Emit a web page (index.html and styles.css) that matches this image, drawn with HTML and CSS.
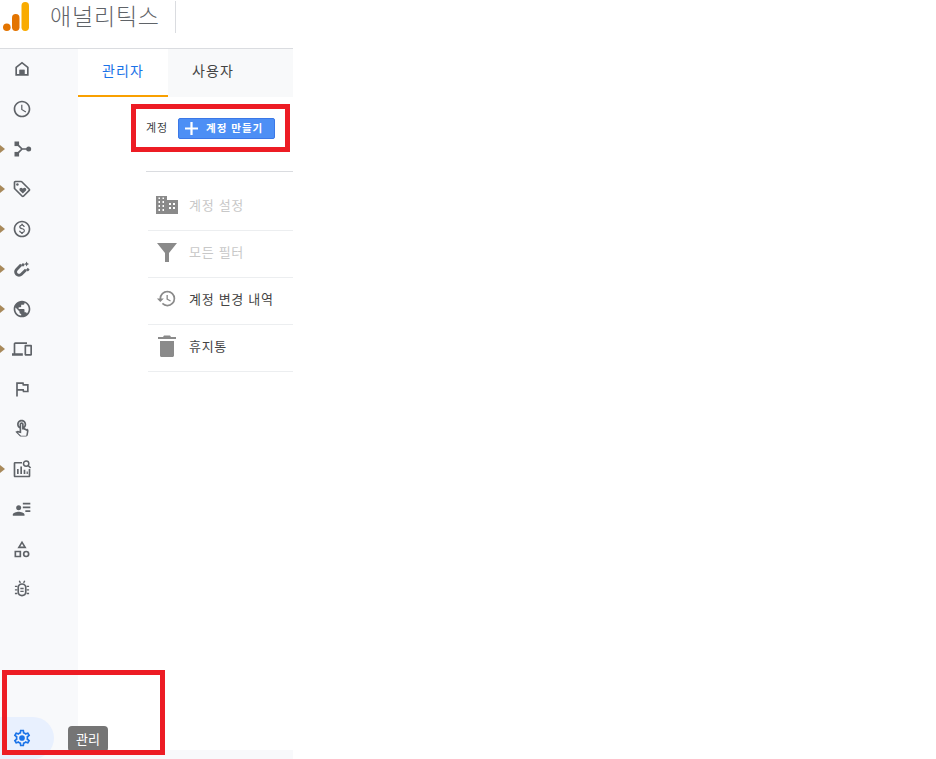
FILE: index.html
```html
<!DOCTYPE html>
<html lang="ko">
<head>
<meta charset="utf-8">
<title>애널리틱스</title>
<link rel="stylesheet" href="styles.css">
</head>
<body>
<div class="page">
  <header class="topbar">
    <svg class="logo" viewBox="0 0 26 29"><rect x="18.500" y="0" width="7.500" height="29" rx="3.700" fill="#f9ab00"/><rect x="9" y="12" width="7.500" height="17" rx="3.700" fill="#e37400"/><circle cx="3.800" cy="25.200" r="3.800" fill="#e37400"/></svg>
    <span class="brand">애널리틱스</span>
    <span class="brand-sep"></span>
  </header>
  <div class="body">
    <nav class="sidebar">
      <div class="nav-item"><svg class="ic" viewBox="0 0 24 24"><path d="M12 3.200L4 9.500V20h16V9.500zM12 5.700l6 4.700V18h-3v-5H9v5H6v-7.600z" fill-rule="evenodd"/><path d="M9 13h6v6H9z"/></svg></div>
      <div class="nav-item"><svg class="ic" viewBox="0 0 24 24"><path d="M11.990 2C6.470 2 2 6.480 2 12s4.470 10 9.990 10C17.520 22 22 17.520 22 12S17.520 2 11.990 2zM12 20c-4.420 0-8-3.580-8-8s3.580-8 8-8 8 3.580 8 8-3.580 8-8 8zm.5-13H11v6l5.250 3.150.75-1.230-4.500-2.670z"/></svg></div>
      <div class="nav-item has-arrow"><svg class="ic" viewBox="0 0 24 24"><rect x="3" y="3" width="5.500" height="5.500"/><rect x="3" y="15.500" width="5.500" height="5.500"/><circle cx="20" cy="12" r="3"/><path d="M5.500 5.500l6.500 6.500-6.500 6.500M11 12h8" fill="none" stroke="#5f6368" stroke-width="2"/></svg></div>
      <div class="nav-item has-arrow"><svg class="ic" viewBox="0 0 24 24"><path d="M21.410 11.580l-9-9C12.050 2.220 11.550 2 11 2H4c-1.100 0-2 .9-2 2v7c0 .55.22 1.050.59 1.420l9 9c.36.36.86.58 1.410.58s1.050-.22 1.410-.59l7-7c.37-.36.59-.86.59-1.410s-.23-1.060-.59-1.420zM13 20.010L4 11V4h7v-.01l9 9-7 7.020z"/><circle cx="6.500" cy="6.500" r="1.500"/><path d="M8.900 12.550c0 .57.23 1.070.6 1.450l3.500 3.500 3.500-3.500c.37-.37.6-.89.6-1.450 0-1.130-.92-2.050-2.050-2.050-.57 0-1.080.23-1.450.6l-.6.6-.6-.59c-.37-.38-.88-.61-1.450-.61-1.130 0-2.050.92-2.050 2.050z"/></svg></div>
      <div class="nav-item has-arrow"><svg class="ic" viewBox="0 0 24 24"><path d="M12 2C6.480 2 2 6.480 2 12s4.480 10 10 10 10-4.480 10-10S17.520 2 12 2zm0 18c-4.410 0-8-3.590-8-8s3.590-8 8-8 8 3.590 8 8-3.590 8-8 8z"/><path d="M12.400 11.100c-1.600-.5-2.200-.9-2.200-1.700 0-.8.7-1.300 1.800-1.300 1.200 0 1.700.6 1.700 1.400h1.600c0-1.200-.8-2.300-2.200-2.700V5.600h-2v1.200c-1.400.3-2.500 1.200-2.500 2.600 0 1.700 1.400 2.500 3.400 3 1.800.5 2.200 1 2.200 1.800 0 .5-.4 1.400-2 1.400-1.500 0-2.100-.7-2.200-1.500H8.400c.1 1.500 1.200 2.400 2.600 2.700v1.200h2v-1.200c1.400-.3 2.500-1.100 2.500-2.600 0-2-1.700-2.700-3.100-3.100z"/></svg></div>
      <div class="nav-item has-arrow"><svg class="ic" viewBox="0 0 24 24"><path d="M11 7L5.500 12.500a4.100 4.100 0 0 0 5.800 5.800L16.800 12.800" fill="none" stroke="#5f6368" stroke-width="3.400"/><path d="M11 7l2.200-2.200 2.200 2.200-2.200 2.200zM16.800 12.800L19 10.600l2.200 2.200-2.200 2.200z"/><path d="M17.500 3l1 2 2 1-2 1-1 2-1-2-2-1 2-1z"/></svg></div>
      <div class="nav-item has-arrow"><svg class="ic" viewBox="0 0 24 24"><path d="M12 2C6.480 2 2 6.480 2 12s4.480 10 10 10 10-4.480 10-10S17.520 2 12 2zm-1 17.930c-3.950-.49-7-3.850-7-7.930 0-.62.08-1.210.21-1.790L9 15v1c0 1.100.9 2 2 2v1.930zm6.900-2.540c-.26-.81-1-1.390-1.900-1.390h-1v-3c0-.55-.45-1-1-1H8v-2h2c.55 0 1-.45 1-1V7h2c1.100 0 2-.9 2-2v-.41c2.930 1.190 5 4.060 5 7.410 0 2.080-.8 3.970-2.100 5.390z"/></svg></div>
      <div class="nav-item has-arrow"><svg class="ic" viewBox="0 0 24 24"><path d="M4 6h14V4H4c-1.100 0-2 .9-2 2v11H0v3h13v-3H4V6zm19 1h-7c-.55 0-1 .45-1 1v11c0 .55.45 1 1 1h7c.55 0 1-.45 1-1V8c0-.55-.45-1-1-1zm-1 11h-5V9h5v9z"/></svg></div>
      <div class="nav-item"><svg class="ic" viewBox="0 0 24 24"><path d="M12.360 6l.4 2H18v6h-3.360l-.4-2H7V6h5.360M14 4H5v17h2v-7h5.600l.4 2h7V6h-5.600L14 4z"/></svg></div>
      <div class="nav-item"><svg class="ic" viewBox="0 0 24 24"><path d="M18.190 12.440l-3.240-1.620c1.290-1 2.120-2.560 2.120-4.320C17.070 3.470 14.600 1 11.570 1s-5.500 2.470-5.500 5.500c0 2.130 1.220 3.980 3 4.890v3.260c-2.150-.46-2.020-.44-2.260-.44-.53 0-1.030.21-1.410.59L4 15.220l5.090 5.090C9.520 20.750 10.120 21 10.740 21h6.300c.98 0 1.810-.7 1.970-1.670l.8-4.710c.22-1.300-.43-2.580-1.620-3.180zm-.35 2.850l-.8 4.710h-6.300c-.09 0-.17-.04-.24-.1l-3.680-3.680 4.250.89V6.500c0-.28.22-.5.5-.5s.5.22.5.5v6h1.760l3.460 1.730c.4.2.62.63.55 1.060zM8.070 6.500c0-1.930 1.570-3.500 3.500-3.500s3.500 1.570 3.500 3.500c0 .95-.38 1.810-1 2.440V6.500c0-1.380-1.120-2.500-2.500-2.500s-2.500 1.120-2.500 2.500v2.440c-.62-.63-1-1.490-1-2.440z"/></svg></div>
      <div class="nav-item has-arrow"><svg class="ic" viewBox="0 0 24 24"><path d="M12 3.500H3.500C2.700 3.500 2 4.200 2 5v15.500c0 .8.7 1.500 1.500 1.500h17c.8 0 1.500-.7 1.500-1.500V12h-2v8H4V5.500h8z"/><path d="M6 12h2v6H6zM10 9h2v9h-2zM14 13h2v5h-2zM17.500 15h1.500v3h-1.500z"/><circle cx="17" cy="5.500" r="3.200" fill="none" stroke="#5f6368" stroke-width="1.800"/><path d="M19.300 7.800l3 3" stroke="#5f6368" stroke-width="2"/></svg></div>
      <div class="nav-item"><svg class="ic" viewBox="0 0 24 24"><circle cx="8" cy="10.500" r="3"/><path d="M1 20v-1.500c0-2 4.500-3.300 7-3.300s7 1.300 7 3.300V20z"/><path d="M13 4.500h9v2h-9zM13 9h9v2h-9zM16 13.500h6v2h-6z"/></svg></div>
      <div class="nav-item"><svg class="ic" viewBox="0 0 24 24"><path d="M12 2l5.500 9h-11zM12 5.800L10 9h4z" fill-rule="evenodd"/><path d="M3 14h8v8H3zM5 16v4h4v-4z" fill-rule="evenodd"/><path d="M17 14a4 4 0 1 0 0 8 4 4 0 0 0 0-8zm0 2a2 2 0 1 1 0 4 2 2 0 0 1 0-4z" fill-rule="evenodd"/></svg></div>
      <div class="nav-item"><svg class="ic" viewBox="0 0 24 24"><path d="M12 5c-3.300 0-5.500 2.300-5.500 5v6c0 2.700 2.200 5 5.500 5s5.500-2.300 5.500-5v-6c0-2.700-2.200-5-5.500-5zm0 2c2.200 0 3.500 1.400 3.500 3v6c0 1.600-1.300 3-3.500 3s-3.500-1.400-3.500-3v-6c0-1.600 1.300-3 3.500-3z" fill-rule="evenodd"/><path d="M10 10.500h4v1.700h-4zM10 14h4v1.700h-4zM3.500 8h3v1.700h-3zM17.500 8h3v1.700h-3zM3.500 12.200h3v1.700h-3zM17.500 12.200h3v1.700h-3zM3.500 16.500h3v1.700h-3zM17.500 16.500h3v1.700h-3zM8 2.500l1.500-.8 1.300 2.500-1.500.8zM16 2.500l-1.500-.8-1.300 2.500 1.500.8z"/></svg></div>
      <div class="nav-item nav-active"><svg class="ic" viewBox="0 0 24 24"><path d="M19.430 12.980c.04-.32.07-.64.07-.98 0-.34-.03-.66-.07-.98l2.110-1.650c.19-.15.24-.42.12-.64l-2-3.460c-.09-.16-.26-.25-.44-.25-.06 0-.12.01-.17.03l-2.490 1c-.52-.4-1.080-.73-1.690-.98l-.38-2.650C14.460 2.180 14.250 2 14 2h-4c-.25 0-.46.18-.49.42l-.38 2.650c-.61.25-1.170.59-1.690.98l-2.490-1c-.06-.02-.12-.03-.18-.03-.17 0-.34.09-.43.25l-2 3.460c-.13.22-.07.49.12.64l2.110 1.650c-.04.32-.07.65-.07.98 0 .33.03.66.07.98l-2.110 1.650c-.19.15-.24.42-.12.64l2 3.460c.09.16.26.25.44.25.06 0 .12-.01.17-.03l2.490-1c.52.4 1.080.73 1.690.98l.38 2.650c.03.24.24.42.49.42h4c.25 0 .46-.18.49-.42l.38-2.650c.61-.25 1.170-.59 1.690-.98l2.490 1c.06.02.12.03.18.03.17 0 .34-.09.43-.25l2-3.460c.12-.22.07-.49-.12-.64l-2.110-1.650zm-1.980-1.710c.04.31.05.52.05.73 0 .21-.02.43-.05.73l-.14 1.130.89.7 1.080.84-.7 1.210-1.270-.51-1.040-.42-.9.68c-.43.32-.84.56-1.250.73l-1.060.43-.16 1.130-.2 1.350h-1.400l-.19-1.350-.16-1.130-1.060-.43c-.43-.18-.83-.41-1.230-.71l-.91-.7-1.060.43-1.270.51-.7-1.210 1.080-.84.89-.7-.14-1.130c-.03-.31-.05-.54-.05-.74s.02-.43.05-.73l.14-1.130-.89-.7-1.080-.84.7-1.210 1.270.51 1.040.42.9-.68c.43-.32.84-.56 1.250-.73l1.060-.43.16-1.130.2-1.350h1.390l.19 1.350.16 1.130 1.060.43c.43.18.83.41 1.230.71l.91.7 1.060-.43 1.270-.51.7 1.210-1.070.85-.89.7.14 1.130z"/><circle cx="12" cy="12" r="3.400"/></svg></div>
    </nav>
    <main class="main">
      <div class="tabs">
        <div class="tab tab-on">관리자</div>
        <div class="tab">사용자</div>
      </div>
      <section class="account">
        <div class="account-row">
          <span class="account-label">계정</span>
          <button class="create-btn"><svg class="plus" viewBox="0 0 14 14"><path d="M5.800 0h2.400v5.800H14v2.400H8.200V14H5.800V8.200H0V5.800h5.800z"/></svg><span>계정 만들기</span></button>
        </div>
        <ul class="menu">
          <li class="menu-item off"><svg class="mi" viewBox="0 0 24 24"><path d="M12 7V3H1v18h22V7H12zM5 18H3.500v-2H5zm0-4H3.500v-2H5zm0-4H3.500V8H5zm0-4H3.500V4.500H5zm4 12H7.500v-2H9zm0-4H7.500v-2H9zm0-4H7.500V8H9zm0-4H7.500V4.500H9zm7 10h-2v-2h2zm0-4h-2v-2h2zm4 4h-2v-2h2zm0-4h-2v-2h2z"/></svg><span>계정 설정</span></li>
          <li class="menu-item off"><svg class="mi" viewBox="0 0 24 24"><path d="M2 3h20l-8 10v9h-4v-9z"/></svg><span>모든 필터</span></li>
          <li class="menu-item"><svg class="mi mi-small" viewBox="0 0 24 24"><path d="M13 3a9 9 0 0 0-9 9H1l3.890 3.890.07.14L9 12H6c0-3.870 3.130-7 7-7s7 3.130 7 7-3.130 7-7 7c-1.930 0-3.680-.79-4.940-2.060l-1.420 1.420A8.954 8.954 0 0 0 13 21a9 9 0 0 0 0-18zm-1 5v5l4.280 2.540.72-1.210-3.500-2.080V8H12z"/></svg><span>계정 변경 내역</span></li>
          <li class="menu-item"><svg class="mi" viewBox="0 0 24 24"><path d="M5 21.500c0 .8.7 1.500 1.500 1.500h11c.8 0 1.500-.7 1.500-1.500V7H5zM21 3h-5l-1-1.500H9L8 3H3v2h18z"/></svg><span>휴지통</span></li>
        </ul>
      </section>
      <div class="foot"></div>
    </main>
  </div>
  <div class="tooltip">관리</div>
  <div class="mark mark-create"></div>
  <div class="mark mark-admin"></div>
</div>
</body>
</html>
```

FILE: styles.css
```css
* { box-sizing: border-box; }
html, body { margin: 0; height: 100%; background: #fff; overflow: hidden; }
body { font-family: "Noto Sans CJK KR", "Noto Sans", sans-serif; color: #3c4043; }
.page { position: relative; width: 293px; height: 759px; display: flex; flex-direction: column; }

.topbar { height: 49px; flex: none; display: flex; align-items: flex-start; border-bottom: 1px solid #dadce0; padding: 2px 0 0 3px; }
.logo { width: 26px; height: 29px; flex: none; }
.brand { margin: -1px 0 0 21px; font-size: 23px; font-weight: 300; line-height: 28px; color: #5f6368; width: 112px; white-space: nowrap; letter-spacing: .8px; }
.brand-sep { width: 1px; height: 32px; margin: -1px 0 0 13px; background: #dadce0; }

.body { flex: 1; display: flex; min-height: 0; }
.sidebar { width: 78px; flex: none; background: #f8f9fb; display: flex; flex-direction: column; }
.nav-item { height: 40px; flex: none; position: relative; display: flex; align-items: center; padding-left: 12px; }
.has-arrow::before { content: ""; position: absolute; left: 0; top: 16px; border-left: 5px solid #a8895a; border-top: 4px solid transparent; border-bottom: 4px solid transparent; }
.ic { width: 20px; height: 20px; fill: #5f6368; }
.nav-active { height: 42px; width: 54px; margin-top: auto; background: #e8f0fe; border-radius: 0 21px 21px 0; }
.nav-active .ic { fill: #1a73e8; }

.main { flex: 1; min-width: 0; display: flex; flex-direction: column; }
.tabs { height: 48px; flex: none; background: #f8f9fa; display: flex; }
.tab { width: 90px; font-size: 14px; line-height: 43px; letter-spacing: 1.100px; text-align: center; border-bottom: 2px solid transparent; color: #444; }
.tab + .tab { width: 74px; padding-left: 16px; }
.tab-on { color: #1a73e8; background: #fff; border-bottom-color: #f9a000; }

.account { flex: 1; padding: 21px 0 0 68px; }
.account-row { display: flex; align-items: center; height: 21px; }
.account-label { font-size: 11px; width: 32px; letter-spacing: .8px; color: #3c4043; line-height: 19px; padding-bottom: 2px; }
.create-btn { width: 97px; height: 21px; border: 1px solid #3b78e7; border-radius: 2px; background: #4d8ff5; color: #fff; font: 700 10.500px/17px "Noto Sans CJK KR", sans-serif; letter-spacing: 1px; display: flex; align-items: center; padding: 0 0 2px 6px; }
.plus { width: 13px; height: 13px; fill: #fff; margin: 2px 8px 0 0; flex: none; }
.menu { list-style: none; margin: 32px 0 0; padding: 12px 0 0 2px; border-top: 1px solid #dadce0; }
.menu-item { height: 47px; border-bottom: 1px solid #eceef0; display: flex; align-items: center; font-size: 13px; letter-spacing: .7px; color: #444; padding-bottom: 5px; }
.menu-item.off { color: #c8c8c8; }
.mi { width: 24px; height: 24px; fill: #8a8a8a; margin: 0 10px 0 7px; flex: none; }
.mi-small { width: 21px; height: 21px; margin: 0 12px 0 8px; }
.foot { height: 9px; flex: none; background: #f8f9fb; }

.tooltip { position: absolute; left: 68px; top: 726px; width: 40px; height: 26px; background: #757575; color: #fff; font-size: 13px; line-height: 26px; text-align: center; border-radius: 4px; }
.mark { position: absolute; border: 5px solid #ed1c24; }
.mark-create { left: 131px; top: 104px; width: 159px; height: 48px; }
.mark-admin { left: 2px; top: 670px; width: 163px; height: 85px; }
```
